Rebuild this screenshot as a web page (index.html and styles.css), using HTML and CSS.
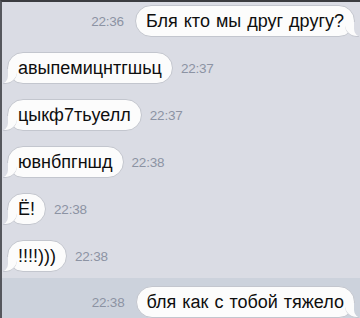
FILE: index.html
```html
<!DOCTYPE html>
<html lang="ru">
<head>
    <meta charset="UTF-8">
    <meta name="viewport" content="width=device-width, initial-scale=1.0">
    <title>Чат</title>
    <link rel="stylesheet" href="styles.css">
</head>
<body>

    <div class="chat">
        <div class="row out">
            <span class="time">22:36</span>
            <div class="bubble">Бля кто мы друг другу?</div>
        </div>
        <div class="row in">
            <div class="bubble">авыпемицнтгшьц</div>
            <span class="time">22:37</span>
        </div>
        <div class="row in">
            <div class="bubble">цыкф7тьуелл</div>
            <span class="time">22:37</span>
        </div>
        <div class="row in">
            <div class="bubble">ювнбпгншд</div>
            <span class="time">22:38</span>
        </div>
        <div class="row in">
            <div class="bubble">Ё!</div>
            <span class="time">22:38</span>
        </div>
        <div class="row in">
            <div class="bubble">!!!!)))</div>
            <span class="time">22:38</span>
        </div>

        <!-- selected message -->
        <div class="band">
            <div class="row out">
                <span class="time">22:38</span>
                <div class="bubble">бля как с тобой тяжело</div>
            </div>
        </div>
    </div>

</body>
</html>
```

FILE: styles.css
```css
* { margin: 0; padding: 0; box-sizing: border-box; }
html, body { height: 318px; overflow: hidden; }
body {
    width: 360px;
    background: #dadce4;
    border-top: 2px solid #3b3c40;
    border-left: 2px solid #55575d;
    font-family: "Liberation Sans", Arial, sans-serif;
}

.chat {
    --bg: #dadce4;
    display: flex;
    flex-direction: column;
    gap: 15px;
    padding-top: 3px;
}

.row { display: flex; align-items: center; gap: 8px; }
.row.in { padding-left: 5px; }
.row.out { justify-content: flex-end; gap: 11px; padding-right: 5px; }

.time {
    font-size: 13.5px;
    color: #8c93a3;
    letter-spacing: -0.2px;
}

.bubble {
    position: relative;
    height: 32px;
    line-height: 30px;
    padding: 0 10px;
    font-size: 18px;
    word-spacing: 1px;
    color: #0e0e0e;
    background: #fcfcfc;
    border: 1px solid #c3c6ce;
    border-radius: 16px;
    white-space: nowrap;
}

/* Tails */
.bubble::before,
.bubble::after {
    content: "";
    position: absolute;
    bottom: -1px;
}

.in .bubble::before {
    left: -5px;
    width: 14px;
    height: 14px;
    background: #fcfcfc;
    border-bottom: 1px solid #c3c6ce;
    border-bottom-right-radius: 12px;
}
.in .bubble::after {
    left: -8px;
    width: 8px;
    height: 15px;
    background: var(--bg);
    border-bottom-right-radius: 8px;
}

.out .bubble::before {
    right: -5px;
    width: 14px;
    height: 14px;
    background: #fcfcfc;
    border-bottom: 1px solid #c3c6ce;
    border-bottom-left-radius: 12px;
}
.out .bubble::after {
    right: -8px;
    width: 8px;
    height: 15px;
    background: var(--bg);
    border-bottom-left-radius: 8px;
}

.band {
    --bg: #ccd2dc;
    background: #ccd2dc;
    padding-top: 8px;
    margin-top: -9px;
    height: 40px;
}
```
